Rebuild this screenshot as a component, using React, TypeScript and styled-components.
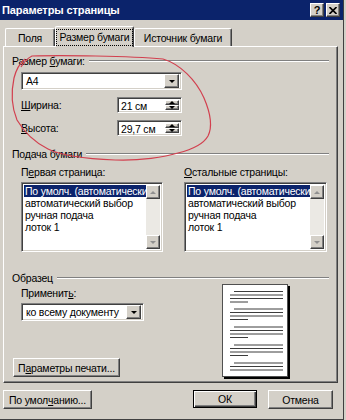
import React from "react";
import styled, { createGlobalStyle, css } from "styled-components";

const GlobalStyle = createGlobalStyle`
  html, body { margin: 0; padding: 0; background: #d4d0c8; }
  body {
    width: 346px; height: 420px; overflow: hidden;
    font-family: "Liberation Sans", Arial, sans-serif;
    font-size: 10.5px; letter-spacing: -0.2px; color: #000;
  }
  * { box-sizing: border-box; }
`;

const BG = "#d4d0c8";

const raised = css`
  background: ${BG};
  border: 1px solid;
  border-color: #ffffff #404040 #404040 #ffffff;
  box-shadow: inset -1px -1px #808080, inset 1px 1px ${BG};
`;

const sunken = css`
  background: #fff;
  border: 1px solid;
  border-color: #808080 #ffffff #ffffff #808080;
  box-shadow: inset 1px 1px #404040, inset -1px -1px ${BG};
`;

const Window = styled.div`
  position: relative;
  width: 344px;
  height: 420px;
  border-right: 1px solid #404040;
  border-bottom: 1px solid #404040;
  display: flex;
  flex-direction: column;
  background: ${BG};
`;

const TitleBar = styled.div`
  height: 20px;
  background: #0b236b;
  display: flex;
  align-items: center;
  padding: 0 3px 0 2px;
`;

const TitleText = styled.div`
  color: #fff;
  font-weight: bold;
  font-size: 11px;
  letter-spacing: -0.1px;
`;

const CaptionButtons = styled.div`
  margin-left: auto;
  display: flex;
  gap: 2px;
`;

const CaptionButton = styled.div`
  ${raised};
  width: 14px;
  height: 14px;
  display: flex;
  align-items: center;
  justify-content: center;
  font-weight: bold;
  font-size: 11px;
  line-height: 1;
`;

const TabsRow = styled.div`
  display: flex;
  align-items: flex-end;
  height: 26px;
  padding-left: 5px;
`;

const Tab = styled.div<{ $active?: boolean; $w: number }>`
  position: relative;
  width: ${(p) => p.$w}px;
  height: ${(p) => (p.$active ? 21 : 18)}px;
  margin-bottom: ${(p) => (p.$active ? -1 : 0)}px;
  z-index: ${(p) => (p.$active ? 2 : 1)};
  background: ${BG};
  border-top: 1px solid #fff;
  border-left: 1px solid #fff;
  border-right: 1px solid #404040;
  box-shadow: inset -1px 0 #808080;
  border-radius: 2px 2px 0 0;
  display: flex;
  align-items: ${(p) => (p.$active ? "flex-start" : "center")};
  padding-top: ${(p) => (p.$active ? 2 : 0)}px;
  justify-content: center;
  white-space: nowrap;
`;

const FocusLabel = styled.span`
  border: 1px dotted #000;
  padding: 1px 2px;
  line-height: 13px;
`;

const Panel = styled.div`
  margin-left: 3px;
  width: 335px;
  background: ${BG};
  border: 1px solid;
  border-color: #ffffff #404040 #404040 #ffffff;
  box-shadow: inset -1px -1px #808080;
  padding: 7px 8px 5px 8px;
  display: flex;
  flex-direction: column;
`;

const GroupHeading = styled.div<{ $mt?: number }>`
  display: flex;
  align-items: center;
  height: 13px;
  margin-top: ${(p) => p.$mt ?? 0}px;
  gap: 4px;
  &::after {
    content: "";
    flex: 1;
    border-top: 1px solid #808080;
    border-bottom: 1px solid #fff;
    margin-top: 1px;
  }
`;

const Indented = styled.div`
  padding-left: 9px;
  display: flex;
  flex-direction: column;
`;

const ComboBox = styled.div<{ $w: number; $mt?: number }>`
  ${sunken};
  width: ${(p) => p.$w}px;
  height: 18px;
  margin-top: ${(p) => p.$mt ?? 0}px;
  display: flex;
  align-items: center;
  padding: 2px;
`;

const ComboText = styled.div`
  flex: 1;
  padding-left: 2px;
  white-space: nowrap;
  overflow: hidden;
`;

const DropButton = styled.div`
  ${raised};
  width: 15px;
  height: 14px;
  display: flex;
  align-items: center;
  justify-content: center;
`;

const ArrowDown = styled.div<{ $size?: number; $color?: string }>`
  width: 0;
  height: 0;
  border-left: ${(p) => p.$size ?? 4}px solid transparent;
  border-right: ${(p) => p.$size ?? 4}px solid transparent;
  border-top: ${(p) => p.$size ?? 4}px solid ${(p) => p.$color ?? "#000"};
`;

const ArrowUp = styled.div<{ $size?: number; $color?: string }>`
  width: 0;
  height: 0;
  border-left: ${(p) => p.$size ?? 4}px solid transparent;
  border-right: ${(p) => p.$size ?? 4}px solid transparent;
  border-bottom: ${(p) => p.$size ?? 4}px solid ${(p) => p.$color ?? "#000"};
`;

const SpinRow = styled.div`
  display: flex;
  align-items: center;
  margin-top: 7px;
`;

const SpinLabel = styled.div`
  width: 96px;
`;

const SpinBox = styled.div`
  ${sunken};
  width: 65px;
  height: 16px;
  display: flex;
  padding: 2px;
`;

const SpinText = styled.div`
  flex: 1;
  padding-left: 1px;
  line-height: 12px;
`;

const SpinButtons = styled.div`
  width: 14px;
  display: flex;
  flex-direction: column;
`;

const SpinButton = styled.div`
  ${raised};
  flex: 1;
  display: flex;
  align-items: center;
  justify-content: center;
`;

const ListsRow = styled.div`
  display: grid;
  grid-template-columns: 142px 143px;
  column-gap: 21px;
  margin-top: 6px;
  padding-left: 9px;
`;

const ListColumn = styled.div`
  display: flex;
  flex-direction: column;
`;

const Label = styled.div`
  height: 13px;
  line-height: 13px;
  white-space: nowrap;
`;

const ListBox = styled.div`
  ${sunken};
  margin-top: 3px;
  height: 70px;
  display: flex;
  padding: 2px;
`;

const ListItems = styled.div`
  flex: 1;
  min-width: 0;
  overflow: hidden;
  display: flex;
  flex-direction: column;
`;

const ListItem = styled.div<{ $selected?: boolean }>`
  height: 12px;
  line-height: 12px;
  padding-left: 1px;
  white-space: nowrap;
  overflow: hidden;
  background: ${(p) => (p.$selected ? "#0b236b" : "transparent")};
  color: ${(p) => (p.$selected ? "#fff" : "#000")};
`;

const ScrollBar = styled.div`
  width: 14px;
  display: flex;
  flex-direction: column;
  background-color: #ebe9e4;
`;

const ScrollButton = styled.div`
  ${raised};
  height: 14px;
  display: flex;
  align-items: center;
  justify-content: center;
`;

const ScrollTrack = styled.div`
  flex: 1;
`;

const SampleBody = styled.div`
  display: flex;
  height: 93px;
`;

const SampleLeft = styled.div`
  width: 210px;
  display: flex;
  flex-direction: column;
`;

const ApplyLabel = styled(Label)`
  margin-top: 3px;
`;

const Button = styled.div<{ $w: number; $default?: boolean }>`
  ${raised};
  width: ${(p) => p.$w}px;
  height: ${(p) => (p.$default ? 18 : 19)}px;
  display: flex;
  align-items: center;
  justify-content: center;
  white-space: nowrap;
  ${(p) =>
    p.$default &&
    css`
      border: 1px solid #000;
      box-shadow: inset 1px 1px #fff, inset -1px -1px #404040, inset -2px -2px #808080;
    `}
`;

const PrintButtonWrap = styled.div`
  margin-top: auto;
  margin-left: 1px;
`;

const PagePreview = styled.div`
  width: 68px;
  height: 95px;
  display: flex;
`;

const Page = styled.div`
  width: 66px;
  height: 93px;
  background: #fff;
  border: 1px solid #505050;
  box-shadow: 2px 2px 0 #000;
`;

const BottomRow = styled.div`
  display: flex;
  margin-top: 7px;
  padding: 0 10px 0 3px;
`;

const BottomRight = styled.div`
  margin-left: auto;
  display: flex;
  gap: 11px;
`;

const Annotation = styled.svg`
  position: absolute;
  left: 0;
  top: 0;
  pointer-events: none;
  z-index: 5;
`;

const Acc = styled.span`
  text-decoration: underline;
`;

function PageLines() {
  const groups = [7, 24.5, 42.5, 60.5, 78.5];
  return (
    <svg width="64" height="91" viewBox="0 0 64 91">
      {groups.map((g, i) => (
        <g key={i} stroke="#3c3c3c" strokeWidth="1">
          <line x1="11" x2="60" y1={g - 0.5} y2={g - 0.5} />
          <line x1="7" x2="60" y1={g + 3} y2={g + 3} />
          <line x1="7" x2="60" y1={g + 6.5} y2={g + 6.5} />
          {i < 4 && <line x1="7" x2="25" y1={g + 10} y2={g + 10} />}
        </g>
      ))}
    </svg>
  );
}

function List() {
  return (
    <ListBox>
      <ListItems>
        <ListItem $selected>По умолч. (автоматический</ListItem>
        <ListItem>автоматический выбор</ListItem>
        <ListItem>ручная подача</ListItem>
        <ListItem>лоток 1</ListItem>
      </ListItems>
      <ScrollBar>
        <ScrollButton>
          <ArrowUp $size={3} $color="#909090" />
        </ScrollButton>
        <ScrollTrack />
        <ScrollButton>
          <ArrowDown $size={3} $color="#909090" />
        </ScrollButton>
      </ScrollBar>
    </ListBox>
  );
}

function Spin({ value }: { value: string }) {
  return (
    <SpinBox>
      <SpinText>{value}</SpinText>
      <SpinButtons>
        <SpinButton>
          <ArrowUp $size={3} />
        </SpinButton>
        <SpinButton>
          <ArrowDown $size={3} />
        </SpinButton>
      </SpinButtons>
    </SpinBox>
  );
}

export default function App() {
  return (
    <>
      <GlobalStyle />
      <Window>
        <TitleBar>
          <TitleText>Параметры страницы</TitleText>
          <CaptionButtons>
            <CaptionButton>?</CaptionButton>
            <CaptionButton>
              <svg width="8" height="7" viewBox="0 0 8 7">
                <path d="M0.5 0 L7.5 7 M7.5 0 L0.5 7" stroke="#000" strokeWidth="1.6" />
              </svg>
            </CaptionButton>
          </CaptionButtons>
        </TitleBar>

        <TabsRow>
          <Tab $w={50}>Поля</Tab>
          <Tab $w={79} $active>
            <FocusLabel>Размер бумаги</FocusLabel>
          </Tab>
          <Tab $w={98}>Источник бумаги</Tab>
        </TabsRow>

        <Panel>
          <GroupHeading>
            <span>
              Размер <Acc>б</Acc>умаги:
            </span>
          </GroupHeading>
          <Indented>
            <ComboBox $w={161} $mt={5}>
              <ComboText>А4</ComboText>
              <DropButton>
                <ArrowDown $size={3.5} />
              </DropButton>
            </ComboBox>
            <SpinRow>
              <SpinLabel>
                <Acc>Ш</Acc>ирина:
              </SpinLabel>
              <Spin value="21 см" />
            </SpinRow>
            <SpinRow>
              <SpinLabel>
                <Acc>В</Acc>ысота:
              </SpinLabel>
              <Spin value="29,7 см" />
            </SpinRow>
          </Indented>

          <GroupHeading $mt={11}>
            <span>Подача бумаги</span>
          </GroupHeading>
          <ListsRow>
            <ListColumn>
              <Label>
                П<Acc>е</Acc>рвая страница:
              </Label>
              <List />
            </ListColumn>
            <ListColumn>
              <Label>
                <Acc>О</Acc>стальные страницы:
              </Label>
              <List />
            </ListColumn>
          </ListsRow>

          <GroupHeading $mt={19}>
            <span>Образец</span>
          </GroupHeading>
          <SampleBody>
            <SampleLeft>
              <Indented>
                <ApplyLabel>
                  Применит<Acc>ь</Acc>:
                </ApplyLabel>
                <ComboBox $w={123} $mt={3}>
                  <ComboText>ко всему документу</ComboText>
                  <DropButton>
                    <ArrowDown $size={3.5} />
                  </DropButton>
                </ComboBox>
              </Indented>
              <PrintButtonWrap>
                <Button $w={107}>
                  П<Acc>а</Acc>раметры печати...
                </Button>
              </PrintButtonWrap>
            </SampleLeft>
            <PagePreview>
              <Page>
                <PageLines />
              </Page>
            </PagePreview>
          </SampleBody>
        </Panel>

        <BottomRow>
          <Button $w={89}>
            По умол<Acc>ч</Acc>анию...
          </Button>
          <BottomRight>
            <Button $w={64} $default>
              ОК
            </Button>
            <Button $w={65}>Отмена</Button>
          </BottomRight>
        </BottomRow>

        <Annotation width="346" height="420" viewBox="0 0 346 420">
          <path
            d="M21 67 C24 62 28 58 32 56 C60 55 130 56 163 59 C180 64 196 80 204 98 C210 112 213 126 208 136 C203 145 190 150 178 153 C165 157 140 161 115 160 C90 159 62 156 48 149 C36 143 24 132 17 120 C12 108 11 92 14 78 C16 70 20 63 25 59"
            fill="none"
            stroke="#d2404f"
            strokeWidth="1.2"
          />
        </Annotation>
      </Window>
    </>
  );
}
